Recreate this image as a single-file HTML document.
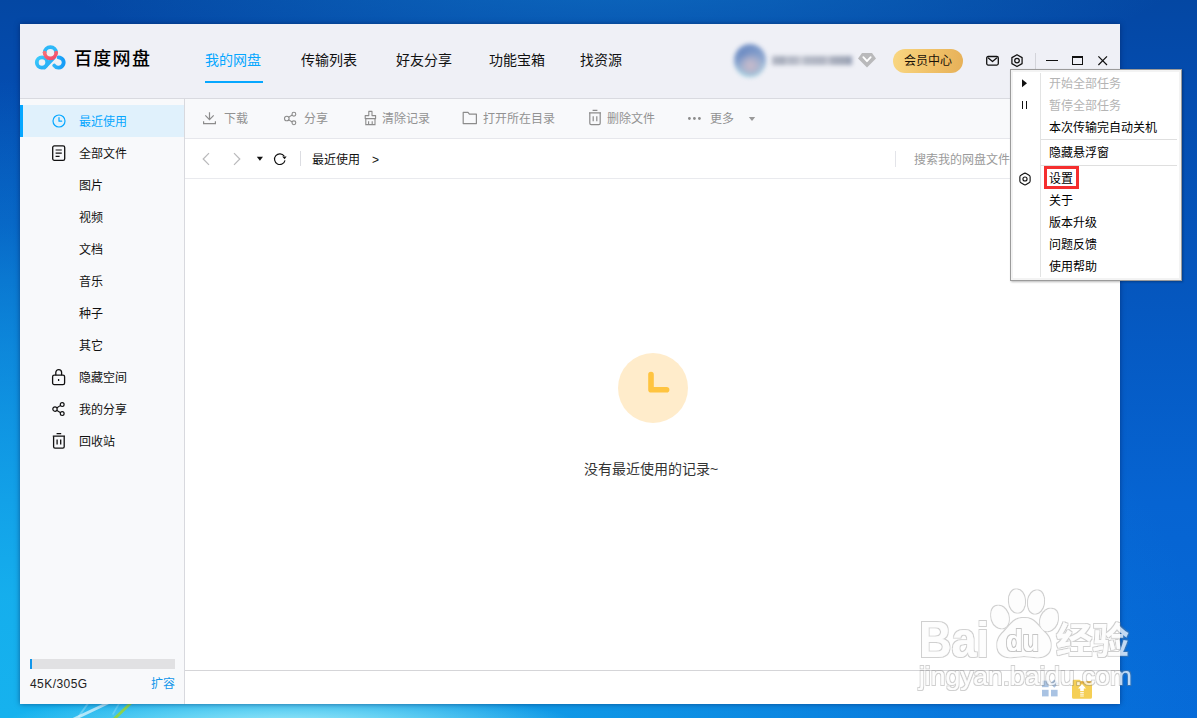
<!DOCTYPE html>
<html lang="zh-CN">
<head>
<meta charset="utf-8">
<title>百度网盘</title>
<style>
*{box-sizing:border-box;margin:0;padding:0}
html,body{width:1197px;height:718px;overflow:hidden}
body{position:relative;font-family:"Liberation Sans","Noto Sans CJK SC",sans-serif;font-size:12px;color:#333;
background:
 radial-gradient(ellipse 290px 36px at 290px 726px, rgba(170,238,250,.95) 0, rgba(130,225,246,.7) 45%, rgba(120,220,245,0) 100%),
 radial-gradient(ellipse 1220px 640px at 0px 718px, rgba(22,178,238,1) 0, rgba(22,178,238,.95) 19%, rgba(20,172,236,.8) 38%, rgba(18,165,234,.6) 58%, rgba(16,160,232,.47) 68%, rgba(14,150,230,.32) 77%, rgba(12,140,228,.06) 96%, rgba(12,140,228,0) 100%),
 radial-gradient(ellipse 560px 110px at 620px -25px, rgba(22,140,220,.5), rgba(22,140,220,0) 100%),
 linear-gradient(180deg,#0447a3 0%,#044caf 12%,#0556bd 39%,#0664d2 70%,#066ad8 100%);
}
.abs{position:absolute}
#win{position:absolute;left:20px;top:24px;width:1100px;height:680px;background:#fff;box-shadow:0 0 5px rgba(0,20,70,.5)}
#hdr{position:absolute;left:0;top:0;width:1100px;height:75px;background:#eff0f6;border-bottom:1px solid #d9dae0}
#side{position:absolute;left:0;top:75px;width:165px;height:605px;background:#f8f9fb;border-right:1px solid #d8d9de}
#tool{position:absolute;left:165px;top:75px;width:935px;height:40px;background:#f8f9fb;border-bottom:1px solid #e6e7ec}
#path{position:absolute;left:165px;top:115px;width:935px;height:40px;background:#fff;border-bottom:1px solid #e9eaee}
#foot{position:absolute;left:165px;top:646px;width:935px;height:34px;background:#fff;border-top:1px solid #d5d5d8}
.t{position:absolute;white-space:nowrap;line-height:16px}
.tab{top:27px;font-size:14px;line-height:18px;color:#111}
.tab.on{color:#06a7ff}
#avatar{left:714px;top:20px;width:32px;height:33px;border-radius:50%;filter:blur(2.2px);
 background:radial-gradient(circle at 52% 66%,#c9bccb 0,#b4b4cc 20%,rgba(150,170,205,0) 50%),radial-gradient(circle at 30% 30%,#6d8cc3 0,rgba(109,140,195,0) 60%),linear-gradient(180deg,#7d99c9 0%,#8ea7d0 45%,#a3c8df 78%,#86d8e8 100%)}
#uname{left:752px;top:32px;width:80px;height:9px;filter:blur(2.2px);
 background:linear-gradient(90deg,#b3b8c5 0,#a5abba 12px,#c4c8d2 15px,#b0b5c3 18px,#b9bdc9 26px,#d2d5dd 29px,#b4b9c6 33px,#aeb3c1 52px,#c7cad4 56px,#a7adbc 60px,#9fa6b6 76px,#8c97b2 80px)}
#vip{left:873px;top:25px;width:70px;height:24px;border-radius:12px;background:linear-gradient(100deg,#f9d782 0%,#f0c168 55%,#e6b058 100%);text-align:center}
#vip span{display:block;font-size:12px;line-height:24px;color:#1a1208}
#sel{left:0;top:81px;width:164px;height:32px;background:#e0f1fc;border-left:3px solid #06a7ff}
.si{left:59px;font-size:12px;line-height:16px;color:#111}
.si.on{color:#06a7ff}
.tb{top:87px;font-size:12px;line-height:16px;color:#929292}
#menu{position:absolute;left:1010px;top:69px;width:172px;height:212px;background:#fff;border:1px solid #9b9b9b;box-shadow:inset 0 0 0 2px #f3f3f3,1px 1px 2px rgba(0,0,0,.28)}
.mi{left:38px;margin-top:-0.5px;font-size:12px;line-height:16px;color:#000}
.mi.dis{color:#b4b4b4}
#wm{position:absolute;left:916px;top:580px;width:230px;height:120px}
</style>
</head>
<body>
<svg class="abs" style="left:0;top:698px" width="400" height="20" viewBox="0 0 400 20">
  <g fill="none" stroke-linecap="round">
    <path d="M110 4 L72 22" stroke="#fff" stroke-opacity=".62" stroke-width="3"/>
    <path d="M89 4 L79 18" stroke="#fff" stroke-opacity=".25" stroke-width="2"/>
    <path d="M120 4 L113 16" stroke="#fff" stroke-opacity=".2" stroke-width="1.6"/>
    <path d="M132 4 L113 22" stroke="#8fd445" stroke-opacity=".95" stroke-width="2.8"/>
  </g>
</svg>
<div id="win">
  <div id="hdr">
    <svg class="abs" style="left:14px;top:20px" width="34" height="28" viewBox="0 0 34 28">
      <defs>
        <linearGradient id="lg1" x1="0" y1="0" x2="1" y2="1"><stop offset="0" stop-color="#3ccbfb"/><stop offset="1" stop-color="#23a8f6"/></linearGradient>
        <linearGradient id="lg2" x1="0" y1="0" x2="1" y2="0"><stop offset="0" stop-color="#2fb4f8"/><stop offset="1" stop-color="#159cf7"/></linearGradient>
        <linearGradient id="lg3" x1="0" y1="0" x2="1" y2="1"><stop offset="0" stop-color="#f76f78"/><stop offset="1" stop-color="#f4486a"/></linearGradient>
      </defs>
      <circle cx="8" cy="18.5" r="5.2" fill="none" stroke="url(#lg1)" stroke-width="3.8"/>
      <path d="M10.5 23.5 L20 13.5" stroke="#2bb3f8" stroke-width="3.8" fill="none" stroke-linecap="round"/>
      <path d="M24.5 13.3 A5.2 5.2 0 1 1 20.2 21.5" fill="none" stroke="url(#lg2)" stroke-width="3.8" stroke-linecap="round"/>
      <path d="M10.6 9 A5.8 5.8 0 0 1 22.2 9" fill="none" stroke="#2db8f8" stroke-width="3.8"/>
      <path d="M10.6 8.6 A5.8 5.8 0 0 0 22.2 8.6" fill="none" stroke="url(#lg3)" stroke-width="3.8" stroke-linecap="round"/>
    </svg>
    <div class="t" id="title" style="left:54px;top:22.5px;font-size:18px;line-height:24px;font-weight:500;color:#000;letter-spacing:1.3px">百度网盘</div>
    <div class="t tab on" style="left:185px">我的网盘</div>
    <div class="t tab" style="left:281px">传输列表</div>
    <div class="t tab" style="left:376px">好友分享</div>
    <div class="t tab" style="left:469px">功能宝箱</div>
    <div class="t tab" style="left:560px">找资源</div>
    <div class="abs" style="left:185px;top:57px;width:58px;height:2px;background:#06a7ff"></div>
    <div class="abs" id="avatar"></div>
    <div class="abs" id="uname"></div>
    <svg class="abs" style="left:837px;top:28px" width="20" height="17" viewBox="0 0 20 17">
      <path d="M5 1 H15 L19 6.5 L10 15.5 L1 6.5 Z" fill="#b9b9bb"/>
      <path d="M6.3 5.2 L10 9.2 L13.7 5.2" fill="none" stroke="#fff" stroke-width="1.8" stroke-linecap="round" stroke-linejoin="round"/>
    </svg>
    <div class="abs" id="vip"><span>会员中心</span></div>
    <svg class="abs" style="left:965px;top:31px" width="15" height="12" viewBox="0 0 15 12">
      <rect x="1.7" y="1.5" width="11.6" height="8.6" rx="1.5" fill="none" stroke="#111" stroke-width="1.3"/>
      <path d="M3 2.8 L7.5 6.5 L12 2.8" fill="none" stroke="#111" stroke-width="1.3" stroke-linejoin="round"/>
    </svg>
    <svg class="abs" style="left:990px;top:29px" width="14" height="15" viewBox="0 0 14 15">
      <path d="M7 1.7 L12.1 4.6 V10.6 L7 13.5 L1.9 10.6 V4.6 Z" fill="none" stroke="#111" stroke-width="1.25" stroke-linejoin="round"/>
      <circle cx="7" cy="7.6" r="2.3" fill="none" stroke="#111" stroke-width="1.25"/>
    </svg>
    <div class="abs" style="left:1015px;top:29px;width:1px;height:17px;background:#d3d4da"></div>
    <div class="abs" style="left:1026px;top:36px;width:12px;height:1px;background:#111"></div>
    <div class="abs" style="left:1052px;top:32px;width:11px;height:9px;border:1px solid #111;border-top-width:2px"></div>
    <svg class="abs" style="left:1077px;top:31px" width="11" height="11" viewBox="0 0 11 11">
      <path d="M1.4 1.4 L10 10 M10 1.4 L1.4 10" stroke="#111" stroke-width="1.2" fill="none"/>
    </svg>
  </div>
  <div id="side"></div>
  <div class="abs" id="sel"></div>
  <svg class="abs" style="left:31px;top:89px" width="16" height="16" viewBox="0 0 16 16">
    <circle cx="8" cy="8" r="6" fill="none" stroke="#06a7ff" stroke-width="1.2"/>
    <path d="M8 4.6 V8.2 H10.7" fill="none" stroke="#06a7ff" stroke-width="1.2" stroke-linecap="round" stroke-linejoin="round"/>
  </svg>
  <svg class="abs" style="left:31px;top:120px" width="16" height="18" viewBox="0 0 16 18">
    <rect x="1.7" y="1.9" width="12" height="14.4" rx="1.6" fill="none" stroke="#111" stroke-width="1.3"/>
    <path d="M4.6 6 H10.8 M4.6 9.2 H10.8 M4.6 12.4 H8.6" stroke="#111" stroke-width="1.2" fill="none"/>
  </svg>
  <svg class="abs" style="left:31px;top:344px" width="16" height="18" viewBox="0 0 16 18">
    <rect x="1.6" y="7.2" width="12" height="9.4" rx="1.6" fill="none" stroke="#111" stroke-width="1.3"/>
    <path d="M4.8 7.2 V4.6 A2.9 2.9 0 0 1 10.6 4.6 V7.2" fill="none" stroke="#111" stroke-width="1.3"/>
    <path d="M7.6 11 V13" stroke="#111" stroke-width="1.3"/>
  </svg>
  <svg class="abs" style="left:31px;top:377px" width="16" height="16" viewBox="0 0 16 16">
    <path d="M5.6 7 L9.6 4.4 M5.6 9.2 L9.6 11.8" stroke="#111" stroke-width="1.1" fill="none"/>
    <circle cx="4" cy="8.1" r="2.2" fill="none" stroke="#111" stroke-width="1.2"/>
    <circle cx="11.2" cy="3.6" r="1.9" fill="none" stroke="#111" stroke-width="1.2"/>
    <circle cx="11.2" cy="12.6" r="1.9" fill="none" stroke="#111" stroke-width="1.2"/>
  </svg>
  <svg class="abs" style="left:31px;top:408px" width="16" height="18" viewBox="0 0 16 18">
    <path d="M5.6 1.6 H10.2 M1.8 4.2 H14" stroke="#111" stroke-width="1.3" fill="none"/>
    <path d="M2.6 4.2 V14.8 A1.4 1.4 0 0 0 4 16.2 H11.8 A1.4 1.4 0 0 0 13.2 14.8 V4.2" fill="none" stroke="#111" stroke-width="1.3"/>
    <path d="M6.1 7.6 V12.6 M9.7 7.6 V12.6" stroke="#111" stroke-width="1.3"/>
  </svg>
<div class="t si on" style="top:90px">最近使用</div>
  <div class="t si" style="top:122px">全部文件</div>
  <div class="t si" style="top:154px">图片</div>
  <div class="t si" style="top:186px">视频</div>
  <div class="t si" style="top:218px">文档</div>
  <div class="t si" style="top:250px">音乐</div>
  <div class="t si" style="top:282px">种子</div>
  <div class="t si" style="top:314px">其它</div>
  <div class="t si" style="top:346px">隐藏空间</div>
  <div class="t si" style="top:378px">我的分享</div>
  <div class="t si" style="top:410px">回收站</div>
  <div class="abs" style="left:10px;top:635px;width:145px;height:10px;background:#e1e1e3"></div>
  <div class="abs" style="left:10px;top:635px;width:2px;height:10px;background:#1296ea"></div>
  <div class="t" style="left:10px;top:652px;font-size:12px;line-height:16px;color:#222;letter-spacing:.45px">45K/305G</div>
  <div class="t" style="left:131px;top:652px;font-size:12px;line-height:16px;color:#1296ea">扩容</div>
  <div id="tool"></div>
  <svg class="abs" style="left:183px;top:88px" width="14" height="13" viewBox="0 0 14 13">
    <path d="M6.5 0.2 V7.6 M2.3 3.4 L6.5 7.7 L10.7 3.4 M0.6 9.2 V11.6 H12.4 V9.2" fill="none" stroke="#8c8c8c" stroke-width="1.2"/>
  </svg>
  <div class="t tb" style="left:204px">下载</div>
  <svg class="abs" style="left:263px;top:87px" width="15" height="15" viewBox="0 0 15 15">
    <path d="M5.4 6.4 L9.2 4 M5.4 8.6 L9.2 11" stroke="#8c8c8c" stroke-width="1.1" fill="none"/>
    <circle cx="3.8" cy="7.5" r="2.3" fill="none" stroke="#8c8c8c" stroke-width="1.1"/>
    <circle cx="10.9" cy="3.2" r="1.9" fill="none" stroke="#8c8c8c" stroke-width="1.1"/>
    <circle cx="10.9" cy="11.8" r="1.9" fill="none" stroke="#8c8c8c" stroke-width="1.1"/>
  </svg>
  <div class="t tb" style="left:284px">分享</div>
  <svg class="abs" style="left:343px;top:86px" width="15" height="16" viewBox="0 0 15 16">
    <path d="M5.8 1.4 H9 V5.6 H12.6 V8.6 H2.2 V5.6 H5.8 Z" fill="none" stroke="#8c8c8c" stroke-width="1.1" stroke-linejoin="round"/>
    <path d="M2.8 8.6 V14.6 H12 V8.6 M5.6 11.2 V14.6 M9.2 11.2 V14.6" fill="none" stroke="#8c8c8c" stroke-width="1.1"/>
  </svg>
  <div class="t tb" style="left:362px">清除记录</div>
  <svg class="abs" style="left:442px;top:87px" width="16" height="14" viewBox="0 0 16 14">
    <path d="M1.2 12.6 V1.4 H6 L7.4 3.2 H14.4 V12.6 Z" fill="none" stroke="#8c8c8c" stroke-width="1.2" stroke-linejoin="round"/>
  </svg>
  <div class="t tb" style="left:463px">打开所在目录</div>
  <svg class="abs" style="left:568px;top:85px" width="14" height="17" viewBox="0 0 14 17">
    <path d="M4.6 1.4 H9.4 M1 3.8 H13" stroke="#8c8c8c" stroke-width="1.2" fill="none"/>
    <path d="M1.8 3.8 V14.2 A1.4 1.4 0 0 0 3.2 15.6 H10.8 A1.4 1.4 0 0 0 12.2 14.2 V3.8" fill="none" stroke="#8c8c8c" stroke-width="1.2"/>
    <path d="M5.2 7.2 V12.2 M8.8 7.2 V12.2" stroke="#8c8c8c" stroke-width="1.2"/>
  </svg>
  <div class="t tb" style="left:587px">删除文件</div>
  <svg class="abs" style="left:667px;top:92px" width="15" height="5" viewBox="0 0 15 5">
    <circle cx="2.4" cy="2.5" r="1.4" fill="#8c8c8c"/><circle cx="7.4" cy="2.5" r="1.4" fill="#8c8c8c"/><circle cx="12.4" cy="2.5" r="1.4" fill="#8c8c8c"/>
  </svg>
  <div class="t tb" style="left:690px">更多</div>
  <svg class="abs" style="left:728px;top:92px" width="8" height="6" viewBox="0 0 8 6"><path d="M0.8 1 H7.2 L4 5 Z" fill="#9a9a9a"/></svg>
  <div id="path"></div>
  <svg class="abs" style="left:181px;top:128px" width="10" height="14" viewBox="0 0 10 14"><path d="M8 1.2 L2.2 7 L8 12.8" fill="none" stroke="#b9b9bb" stroke-width="1.2"/></svg>
  <svg class="abs" style="left:212px;top:128px" width="10" height="14" viewBox="0 0 10 14"><path d="M2 1.2 L7.8 7 L2 12.8" fill="none" stroke="#b9b9bb" stroke-width="1.2"/></svg>
  <svg class="abs" style="left:236px;top:132px" width="8" height="6" viewBox="0 0 8 6"><path d="M0.8 0.8 H7 L3.9 4.8 Z" fill="#111"/></svg>
  <svg class="abs" style="left:252px;top:127px" width="16" height="16" viewBox="0 0 16 16">
    <path d="M12.2 5.2 A5.3 5.3 0 1 0 13 9.4" fill="none" stroke="#111" stroke-width="1.15"/>
    <path d="M10.2 5.4 H14.6 L12.6 8.2 Z" fill="#111"/>
  </svg>
  <div class="abs" style="left:280px;top:127px;width:1px;height:15px;background:#dcdde2"></div>
  <div class="t" style="left:292px;top:128px;font-size:12px;line-height:16px;color:#111">最近使用</div>
  <div class="t" style="left:352px;top:128px;font-size:12px;line-height:16px;color:#111">&gt;</div>
  <div class="abs" style="left:875px;top:127px;width:1px;height:16px;background:#e3e4e9"></div>
  <div class="t" style="left:894px;top:128px;font-size:12px;line-height:16px;color:#9a9a9a">搜索我的网盘文件</div>
  <div id="foot"></div>
  <svg class="abs" style="left:1021px;top:655px" width="18" height="19" viewBox="0 0 18 19">
    <rect x="1" y="1.6" width="6.6" height="6.6" fill="#a9c3e3"/>
    <rect x="1" y="10.8" width="6.6" height="6.6" fill="#a9c3e3"/>
    <rect x="10" y="10.8" width="6.6" height="6.6" fill="#a9c3e3"/>
    <path d="M13.3 0.6 L17.4 4.6 L13.3 8.8 L9.2 4.6 Z" fill="#a9c3e3"/>
  </svg>
  <svg class="abs" style="left:1052px;top:655px" width="20" height="20" viewBox="0 0 20 20">
    <path d="M0 2.4 A1.6 1.6 0 0 1 1.6 0.8 H7.6 L9.2 2.2 H18.4 A1.6 1.6 0 0 1 20 3.8 V18.2 A1.6 1.6 0 0 1 18.4 19.8 H1.6 A1.6 1.6 0 0 1 0 18.2 Z" fill="#f5cf55"/>
    <path d="M9.2 2.2 H18.4 A1.6 1.6 0 0 1 20 3.8 V4.6 H7 Z" fill="#e9b23f"/>
    <path d="M10 5 L14 9.6 H11.8 V12 H8.2 V9.6 H6 Z" fill="#fff"/>
    <path d="M8.2 13.4 H11.8 M8.2 15.2 H11.8 M8.2 17 H11.8" stroke="#fff" stroke-width="0.9"/>
  </svg>
  <div class="abs" style="left:598px;top:329px;width:70px;height:70px;border-radius:50%;background:#ffeccb"></div>
  <svg class="abs" style="left:598px;top:329px" width="70" height="70" viewBox="0 0 70 70">
    <path d="M33 21.6 V36.7 H48.6" fill="none" stroke="#ffc440" stroke-width="5.6" stroke-linecap="round" stroke-linejoin="round"/>
  </svg>
  <div class="t" style="left:564px;top:436px;font-size:14px;line-height:18px;color:#333">没有最近使用的记录~</div>
</div>
<div id="wm">
  <svg class="abs" style="left:0;top:0" width="230" height="120" viewBox="0 0 230 120">
    <filter id="wmf" x="-5%" y="-5%" width="110%" height="110%">
      <feMorphology in="SourceAlpha" operator="dilate" radius="1" result="d"/>
      <feComposite in="d" in2="SourceAlpha" operator="out" result="ring"/>
      <feGaussianBlur in="ring" stdDeviation="0.7" result="rb"/>
      <feFlood flood-color="#808080" flood-opacity="0.5"/>
      <feComposite in2="rb" operator="in" result="ringc"/>
      <feMerge><feMergeNode in="ringc"/><feMergeNode in="SourceGraphic"/></feMerge>
    </filter>
    <g filter="url(#wmf)" fill="#fff" fill-opacity=".74">
      <ellipse cx="84" cy="37" rx="8.5" ry="11.5" transform="rotate(-18 84 37)"/>
      <ellipse cx="101" cy="21" rx="8" ry="11.5" transform="rotate(-4 101 21)"/>
      <ellipse cx="120" cy="22" rx="8" ry="11.5" transform="rotate(8 120 22)"/>
      <ellipse cx="133" cy="40" rx="8.5" ry="11.5" transform="rotate(22 133 40)"/>
      <path d="M108 38 C118 38 122 46 128 52 C136 59 136 68 132 73 C126 80 116 76 108 76 C100 76 90 80 84 73 C80 68 80 59 88 52 C94 46 98 38 108 38 Z"/>
      <text x="3" y="77" font-family="Liberation Sans, sans-serif" font-weight="bold" font-size="50" textLength="70" lengthAdjust="spacingAndGlyphs">Bai</text>
      <text x="140" y="74" font-family="Noto Sans CJK SC, sans-serif" font-weight="bold" font-size="36" textLength="73" lengthAdjust="spacingAndGlyphs">经验</text>
      <text x="3" y="104.5" font-family="Liberation Sans, sans-serif" font-size="25.5" textLength="213" lengthAdjust="spacingAndGlyphs">jingyan.baidu.com</text>
    </g>
    <g filter="url(#wmf)" fill="#fff" fill-opacity=".9">
      <text x="90" y="71" font-family="Liberation Sans, sans-serif" font-weight="bold" font-size="29" textLength="33" lengthAdjust="spacingAndGlyphs">du</text>
    </g>
  </svg>
</div>
<div id="menu">
  <div class="abs" style="left:29px;top:3px;width:1px;height:204px;background:#e2e3e3"></div>
  <div class="abs" style="left:30px;top:69px;width:136px;height:1px;background:#dfdfdf"></div>
  <div class="abs" style="left:30px;top:95px;width:136px;height:1px;background:#dfdfdf"></div>
  <svg class="abs" style="left:10px;top:9px" width="8" height="10" viewBox="0 0 8 10"><path d="M1 0.2 L6 4.2 L1 8.2 Z" fill="#111"/></svg>
  <div class="abs" style="left:11px;top:31px;width:1px;height:8px;background:#111"></div>
  <div class="abs" style="left:15px;top:31px;width:1px;height:8px;background:#111"></div>
  <svg class="abs" style="left:6.5px;top:102px" width="14" height="14" viewBox="0 0 15 15">
    <path d="M7.5 1.2 Q8.2 1.2 9.2 1.9 L11.9 3.5 Q13 4.1 13 5.4 V9.6 Q13 10.9 11.9 11.5 L9.2 13.1 Q8.2 13.8 7.5 13.8 Q6.8 13.8 5.8 13.1 L3.1 11.5 Q2 10.9 2 9.6 V5.4 Q2 4.1 3.1 3.5 L5.8 1.9 Q6.8 1.2 7.5 1.2 Z" fill="none" stroke="#111" stroke-width="1.2"/>
    <circle cx="7.5" cy="7.5" r="2.2" fill="none" stroke="#111" stroke-width="1.2"/>
  </svg>
  <div class="abs" style="left:33px;top:96px;width:35px;height:23px;border:3px solid #f52e2e"></div>
  <div class="t mi dis" style="top:6px">开始全部任务</div>
  <div class="t mi dis" style="top:28px">暂停全部任务</div>
  <div class="t mi " style="top:50px">本次传输完自动关机</div>
  <div class="t mi " style="top:75.5px">隐藏悬浮窗</div>
  <div class="t mi " style="top:101.5px">设置</div>
  <div class="t mi " style="top:123.5px">关于</div>
  <div class="t mi " style="top:145.5px">版本升级</div>
  <div class="t mi " style="top:167.5px">问题反馈</div>
  <div class="t mi " style="top:189.5px">使用帮助</div>
</div>
</body>
</html>
